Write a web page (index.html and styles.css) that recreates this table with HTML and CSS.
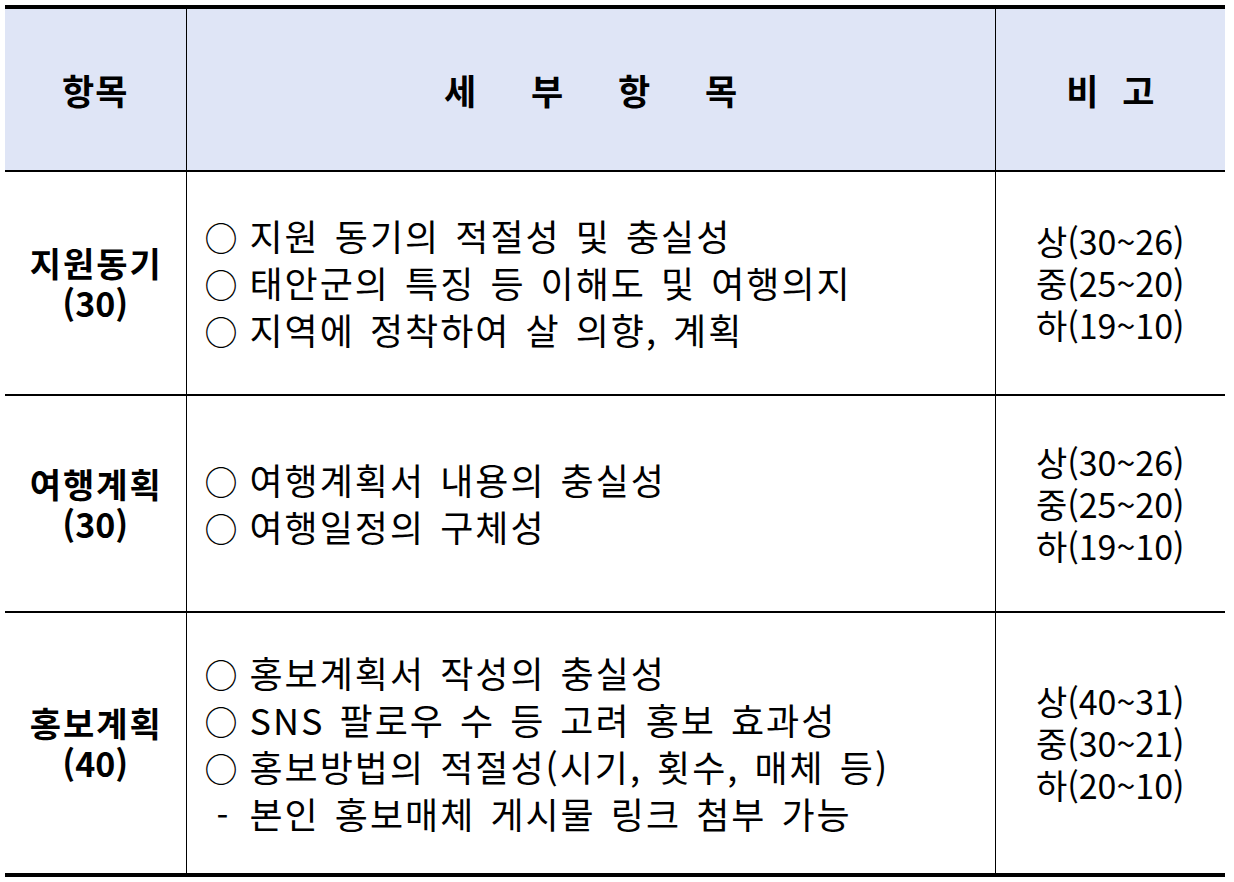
FILE: index.html
```html
<!DOCTYPE html>
<html lang="ko">
<head>
<meta charset="utf-8">
<title>평가 항목</title>
<link rel="stylesheet" href="styles.css">
</head>
<body>
<table class="score-table">
  <colgroup>
    <col class="c-item">
    <col class="c-detail">
    <col class="c-note">
  </colgroup>
  <thead>
    <tr class="head-row">
      <th class="h-item">항목</th>
      <th class="h-detail">세 부 항 목</th>
      <th class="h-note">비 고</th>
    </tr>
  </thead>
  <tbody>
    <tr class="row-1">
      <td class="item"><span class="item-name">지원동기</span><span class="item-score">(30)</span></td>
      <td class="detail">
        <div class="line"><span class="mark">○</span><span class="txt">지원 동기의 적절성 및 충실성</span></div>
        <div class="line"><span class="mark">○</span><span class="txt">태안군의 특징 등 이해도 및 여행의지</span></div>
        <div class="line"><span class="mark">○</span><span class="txt">지역에 정착하여 살 의향, 계획</span></div>
      </td>
      <td class="note">상(30~26)<br>중(25~20)<br>하(19~10)</td>
    </tr>
    <tr class="row-2">
      <td class="item"><span class="item-name">여행계획</span><span class="item-score">(30)</span></td>
      <td class="detail">
        <div class="line"><span class="mark">○</span><span class="txt">여행계획서 내용의 충실성</span></div>
        <div class="line"><span class="mark">○</span><span class="txt">여행일정의 구체성</span></div>
      </td>
      <td class="note">상(30~26)<br>중(25~20)<br>하(19~10)</td>
    </tr>
    <tr class="row-3">
      <td class="item"><span class="item-name">홍보계획</span><span class="item-score">(40)</span></td>
      <td class="detail">
        <div class="line"><span class="mark">○</span><span class="txt">홍보계획서 작성의 충실성</span></div>
        <div class="line"><span class="mark">○</span><span class="txt">SNS 팔로우 수 등 고려 홍보 효과성</span></div>
        <div class="line"><span class="mark">○</span><span class="txt">홍보방법의 적절성(시기, 횟수, 매체 등)</span></div>
        <div class="line"><span class="mark dash">-</span><span class="txt">본인 홍보매체 게시물 링크 첨부 가능</span></div>
      </td>
      <td class="note">상(40~31)<br>중(30~21)<br>하(20~10)</td>
    </tr>
  </tbody>
</table>
</body>
</html>
```

FILE: styles.css
```css
html, body {
  margin: 0;
  padding: 0;
  background: #ffffff;
}

body {
  padding: 5px 0 0 5px;
  font-family: "Noto Sans CJK KR", "Noto Sans", sans-serif;
  color: #000;
}

.score-table {
  width: 1220px;
  border-collapse: collapse;
  table-layout: fixed;
  border-top: 4px solid #000;
  border-bottom: 4px solid #000;
}

.c-item { width: 181px; }
.c-detail { width: 809px; }
.c-note { width: 230px; }

.score-table th,
.score-table td {
  padding: 0;
  border-left: 1px solid #000;
  border-right: 1px solid #000;
  border-bottom: 2px solid #000;
  vertical-align: middle;
}

.score-table th:first-child,
.score-table td:first-child { border-left: none; }
.score-table th:last-child,
.score-table td:last-child { border-right: none; }

.score-table tbody tr:last-child td { border-bottom: none; }

.head-row {
  height: 164px;
  background: #dfe5f6;
}

.head-row th {
  font-size: 35px;
  font-weight: 700;
  text-align: center;
}

.h-item { letter-spacing: 1px; }
.h-detail { word-spacing: 45px; }
.h-note { word-spacing: 14px; }

.row-1 { height: 224px; }
.row-2 { height: 217px; }
.row-3 { height: 263px; }

.item {
  text-align: center;
  font-size: 34px;
  font-weight: 700;
  line-height: 40px;
}

.item-name,
.item-score {
  display: block;
}

.item-name { letter-spacing: 2px; padding-left: 2px; }

.detail {
  padding-left: 18px !important;
  font-size: 36px;
  line-height: 45px;
}

.line {
  display: flex;
  align-items: baseline;
  white-space: nowrap;
}

.mark {
  box-sizing: border-box;
  flex: 0 0 45px;
  font-size: 33px;
}

.mark.dash {
  padding-left: 12px;
  font-size: 34px;
}

.txt {
  letter-spacing: 2px;
  word-spacing: 3px;
}

.note {
  text-align: center;
  font-size: 34px;
  line-height: 42px;
}
```
